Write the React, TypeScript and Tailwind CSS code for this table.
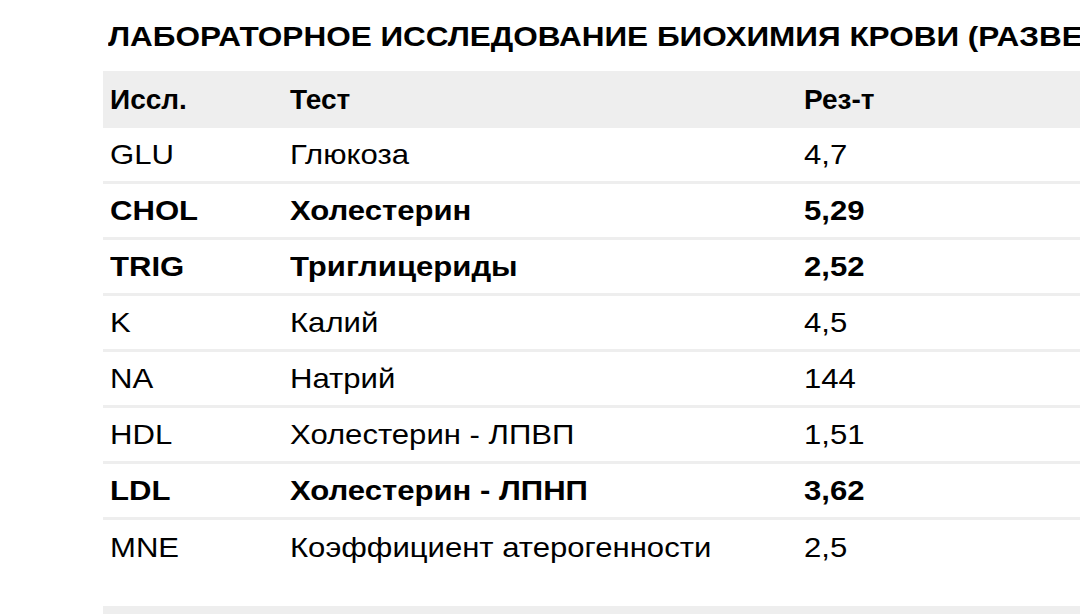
const rows = [
  { code: "GLU", name: "Глюкоза", value: "4,7", bold: false },
  { code: "CHOL", name: "Холестерин", value: "5,29", bold: true },
  { code: "TRIG", name: "Триглицериды", value: "2,52", bold: true },
  { code: "K", name: "Калий", value: "4,5", bold: false },
  { code: "NA", name: "Натрий", value: "144", bold: false },
  { code: "HDL", name: "Холестерин - ЛПВП", value: "1,51", bold: false },
  { code: "LDL", name: "Холестерин - ЛПНП", value: "3,62", bold: true },
  { code: "MNE", name: "Коэффициент атерогенности", value: "2,5", bold: false },
];

function Cell({ children, className }: { children: React.ReactNode; className: string }) {
  return (
    <div className={className}>
      <span className="inline-block origin-left scale-x-[1.11] whitespace-nowrap">{children}</span>
    </div>
  );
}

export default function App() {
  return (
    <div className="h-[614px] w-[1080px] overflow-hidden bg-white font-['Liberation_Sans',Arial,sans-serif] text-black">
      <div className="pl-[108px] pt-[21px]">
        <div className="inline-block origin-left scale-x-[1.125] whitespace-nowrap text-[28px] leading-[32px] font-bold">
          ЛАБОРАТОРНОЕ ИССЛЕДОВАНИЕ БИОХИМИЯ КРОВИ (РАЗВЕРНУТЫЙ)
        </div>
      </div>
      <div className="ml-[103px] mt-[18px] w-[1200px] text-[28px]">
        <div className="flex h-[57px] items-center bg-[#eeeeee] font-bold">
          <div className="w-[180px] pl-[7px]">Иссл.</div>
          <div className="w-[514px] pl-[7px]">Тест</div>
          <div className="flex-1 pl-[7px]">Рез-т</div>
        </div>
        {rows.map((r, i) => (
          <div
            key={r.code}
            className={`flex h-[56px] items-center ${i < rows.length - 1 ? "border-b-[3px] border-[#eeeeee]" : ""} ${r.bold ? "font-bold" : ""}`}
          >
            <Cell className="w-[180px] pl-[7px]">{r.code}</Cell>
            <Cell className="w-[514px] pl-[7px]">{r.name}</Cell>
            <Cell className="flex-1 pl-[7px]">{r.value}</Cell>
          </div>
        ))}
        <div className="mt-[30px] h-[40px] bg-[#eeeeee]" />
      </div>
    </div>
  );
}
